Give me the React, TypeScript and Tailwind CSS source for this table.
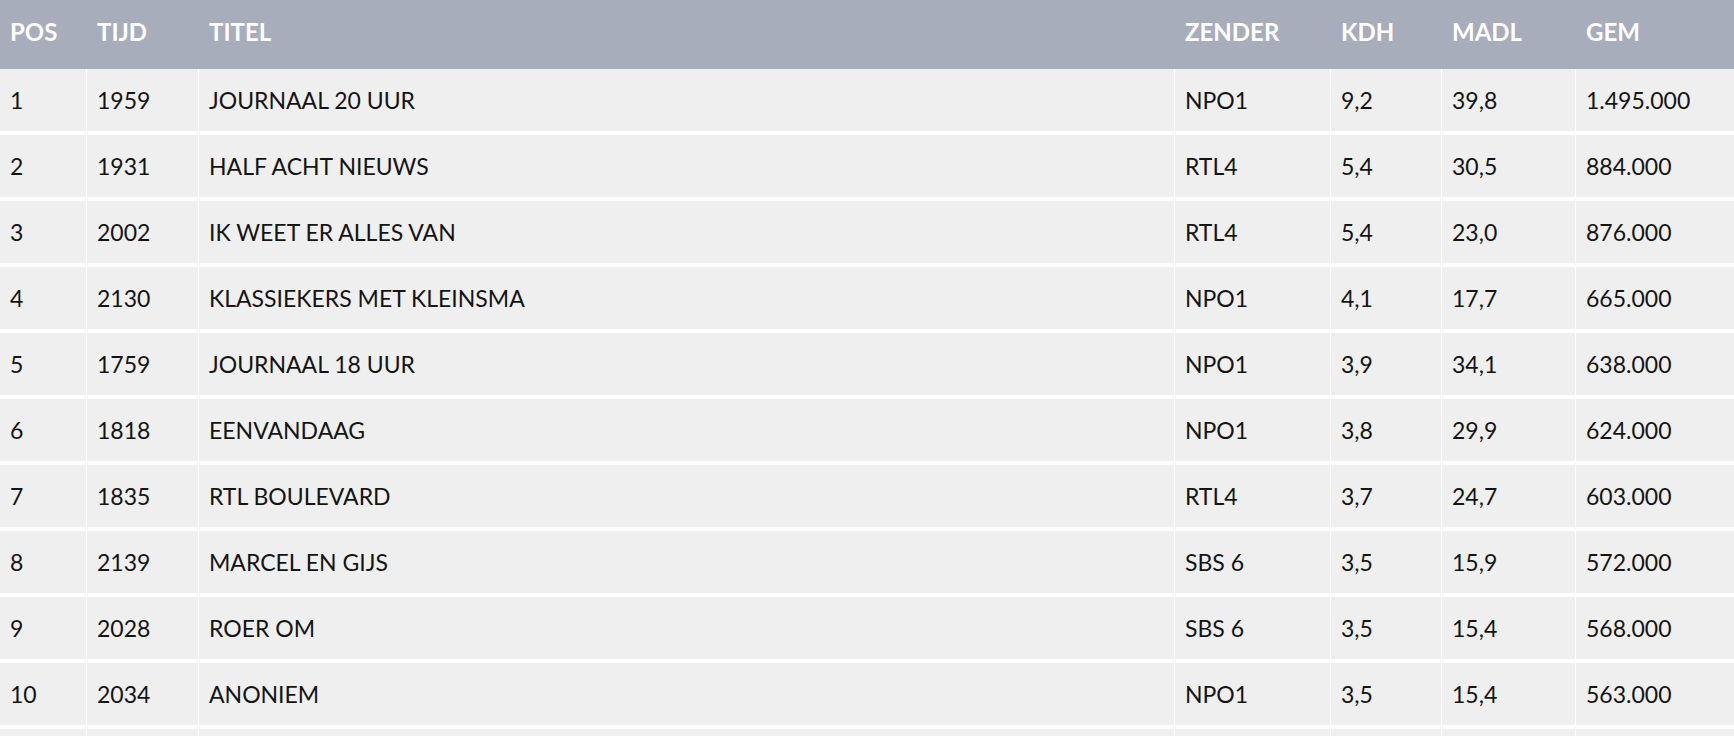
import React from "react";

type Row = {
  pos: string;
  tijd: string;
  titel: string;
  zender: string;
  kdh: string;
  madl: string;
  gem: string;
};

const rows: Row[] = [
  { pos: "1", tijd: "1959", titel: "JOURNAAL 20 UUR", zender: "NPO1", kdh: "9,2", madl: "39,8", gem: "1.495.000" },
  { pos: "2", tijd: "1931", titel: "HALF ACHT NIEUWS", zender: "RTL4", kdh: "5,4", madl: "30,5", gem: "884.000" },
  { pos: "3", tijd: "2002", titel: "IK WEET ER ALLES VAN", zender: "RTL4", kdh: "5,4", madl: "23,0", gem: "876.000" },
  { pos: "4", tijd: "2130", titel: "KLASSIEKERS MET KLEINSMA", zender: "NPO1", kdh: "4,1", madl: "17,7", gem: "665.000" },
  { pos: "5", tijd: "1759", titel: "JOURNAAL 18 UUR", zender: "NPO1", kdh: "3,9", madl: "34,1", gem: "638.000" },
  { pos: "6", tijd: "1818", titel: "EENVANDAAG", zender: "NPO1", kdh: "3,8", madl: "29,9", gem: "624.000" },
  { pos: "7", tijd: "1835", titel: "RTL BOULEVARD", zender: "RTL4", kdh: "3,7", madl: "24,7", gem: "603.000" },
  { pos: "8", tijd: "2139", titel: "MARCEL EN GIJS", zender: "SBS 6", kdh: "3,5", madl: "15,9", gem: "572.000" },
  { pos: "9", tijd: "2028", titel: "ROER OM", zender: "SBS 6", kdh: "3,5", madl: "15,4", gem: "568.000" },
  { pos: "10", tijd: "2034", titel: "ANONIEM", zender: "NPO1", kdh: "3,5", madl: "15,4", gem: "563.000" },
];

// column widths taken from the white divider lines
const cols = "grid grid-cols-[86px_111px_975px_155px_110px_133px_1fr] gap-x-px";

const headers = ["POS", "TIJD", "TITEL", "ZENDER", "KDH", "MADL", "GEM"];

export default function App() {
  return (
    <div
      className="h-[736px] w-full overflow-hidden bg-white"
      style={{ fontFamily: "Lato, 'Noto Sans', sans-serif" }}
    >
      <div className={`${cols} h-[69px] bg-[#a7adba]`}>
        {headers.map((h) => (
          <div key={h} className="flex items-center pb-[5px] pl-[10px] text-[24px] font-bold text-white">
            {h}
          </div>
        ))}
      </div>
      <div className="flex flex-col gap-y-[4px]">
        {rows.map((r) => (
          <div key={r.pos} className={`${cols} h-[62px] bg-white`}>
            {[r.pos, r.tijd, r.titel, r.zender, r.kdh, r.madl, r.gem].map((v, i) => (
              <div
                key={i}
                className="flex items-center bg-[#efefef] pl-[10px] text-[23px] text-[#141414]"
              >
                {v}
              </div>
            ))}
          </div>
        ))}
        {/* next row, cut off by the bottom edge */}
        <div className={`${cols} h-[62px] bg-white`}>
          {headers.map((h) => (
            <div key={h} className="bg-[#efefef]" />
          ))}
        </div>
      </div>
    </div>
  );
}
